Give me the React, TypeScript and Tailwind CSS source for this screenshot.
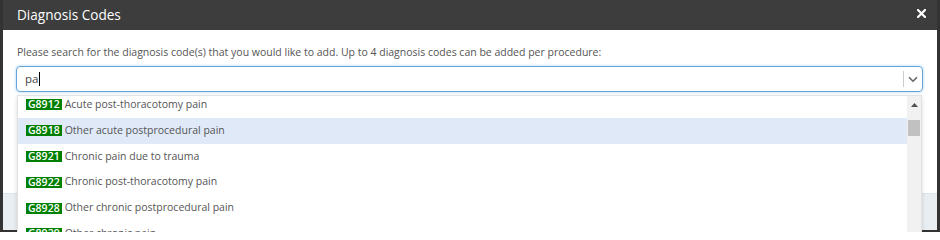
import React from "react";

const rows = [
  { code: "G8912", label: "Acute post-thoracotomy pain" },
  { code: "G8918", label: "Other acute postprocedural pain", active: true },
  { code: "G8921", label: "Chronic pain due to trauma" },
  { code: "G8922", label: "Chronic post-thoracotomy pain" },
  { code: "G8928", label: "Other chronic postprocedural pain" },
  { code: "G8929", label: "Other chronic pain" },
];

export default function App() {
  return (
    <div className="w-[940px] h-[232px] bg-[#333333] overflow-hidden font-['Open_Sans',sans-serif]">
      <div className="ml-[3px] w-[934px] h-[230px] bg-white flex flex-col">
        <div className="h-[30px] bg-[#3d3d3d] flex items-center justify-between pl-[14px] pr-[11px] shrink-0">
          <span className="text-white text-[13.6px] leading-none">Diagnosis Codes</span>
          <svg width="9" height="9" viewBox="0 0 9 9" className="mb-[4px]">
            <path d="M1 1 L8 8 M8 1 L1 8" stroke="white" strokeWidth="2.2" strokeLinecap="square" />
          </svg>
        </div>
        <div className="flex-1 pl-[13px] pr-[14px] pt-[14px]">
          <p className="text-[10.5px] leading-[16px] text-[#555555] pl-[1px]">
            Please search for the diagnosis code(s) that you would like to add. Up to 4 diagnosis codes can be added per procedure:
          </p>
          <div className="relative mt-[6px]">
            <div className="h-[26px] border border-[#66a3d6] rounded-[4px] shadow-[0_0_3px_rgba(102,175,233,0.6)] flex items-center">
              <div className="flex-1 flex items-center pl-[8px] text-[11.5px] text-[#444444]">
                <span>pa</span>
                <span className="w-px h-[14px] bg-black ml-[1px]" />
              </div>
              <div className="w-px h-[16px] bg-[#cccccc]" />
              <div className="w-[18px] flex items-center justify-center">
                <svg width="10" height="7" viewBox="0 0 10 7">
                  <path d="M1 1.2 L5 5.2 L9 1.2" fill="none" stroke="#666666" strokeWidth="1.6" />
                </svg>
              </div>
            </div>
            <div className="absolute left-[1px] right-[1px] top-full mt-[3px] h-[160px] bg-white border border-[#e2e2e2] shadow-[0_2px_4px_rgba(0,0,0,0.15)] flex overflow-hidden z-10">
              <div className="flex-1 overflow-hidden">
                <div className="-mt-[4px]">
                  {rows.map((r) => (
                    <div
                      key={r.code}
                      className={`h-[25.8px] flex items-center pl-[8px] text-[10.5px] text-[#555555] ${r.active ? "bg-[#dfe9f8]" : ""}`}
                    >
                      <span className="bg-[#008000] text-white font-semibold px-[2px] leading-[11px] h-[11px]">{r.code}</span>
                      <span className="ml-[3px]">{r.label}</span>
                    </div>
                  ))}
                </div>
              </div>
              <div className="w-[14px] bg-[#f1f1f1] flex flex-col items-center">
                <svg width="7" height="4" viewBox="0 0 7 4" className="mt-[7px]">
                  <path d="M0 4 L3.5 0 L7 4 Z" fill="#505050" />
                </svg>
                <div className="mt-[13px] w-[12px] h-[16px] bg-[#c1c1c1]" />
              </div>
            </div>
          </div>
        </div>
        <div className="h-[37px] bg-[#e9eef2] border-t border-[#dde3e8] shrink-0" />
      </div>
    </div>
  );
}
